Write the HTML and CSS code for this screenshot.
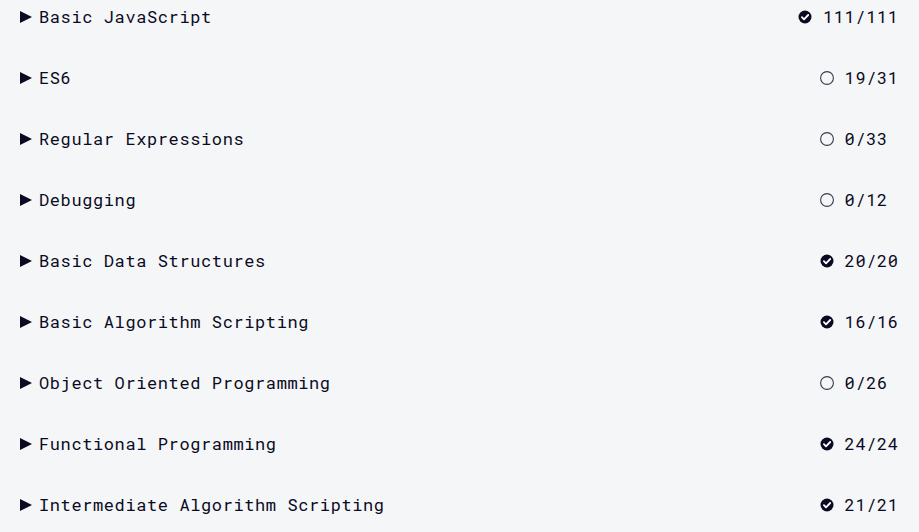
FILE: index.html
```html
<!DOCTYPE html>
<html lang="en">
<head>
<meta charset="utf-8">
<title>Curriculum</title>
<link rel="stylesheet" href="styles.css">
</head>
<body>
<ul class="blocks">
  <li class="block"><span class="title"><svg class="caret" viewBox="0 0 12 12"><polygon points="0,0 12,6 0,12"/></svg>Basic JavaScript</span><span class="progress"><svg class="icon" viewBox="0 0 14 14"><circle cx="7" cy="7" r="6.5" fill="#0a0a23"/><path d="M3.9 7.2l2.1 2.1 4.2-4.3" fill="none" stroke="#fff" stroke-width="1.8" stroke-linecap="round" stroke-linejoin="round"/></svg><span class="count">111/111</span></span></li>
  <li class="block"><span class="title"><svg class="caret" viewBox="0 0 12 12"><polygon points="0,0 12,6 0,12"/></svg>ES6</span><span class="progress"><svg class="icon" viewBox="0 0 14 14"><circle cx="7" cy="7" r="6.4" fill="none" stroke="#3b3b4f" stroke-width="1.1"/></svg><span class="count">19/31</span></span></li>
  <li class="block"><span class="title"><svg class="caret" viewBox="0 0 12 12"><polygon points="0,0 12,6 0,12"/></svg>Regular Expressions</span><span class="progress"><svg class="icon" viewBox="0 0 14 14"><circle cx="7" cy="7" r="6.4" fill="none" stroke="#3b3b4f" stroke-width="1.1"/></svg><span class="count">0/33</span></span></li>
  <li class="block"><span class="title"><svg class="caret" viewBox="0 0 12 12"><polygon points="0,0 12,6 0,12"/></svg>Debugging</span><span class="progress"><svg class="icon" viewBox="0 0 14 14"><circle cx="7" cy="7" r="6.4" fill="none" stroke="#3b3b4f" stroke-width="1.1"/></svg><span class="count">0/12</span></span></li>
  <li class="block"><span class="title"><svg class="caret" viewBox="0 0 12 12"><polygon points="0,0 12,6 0,12"/></svg>Basic Data Structures</span><span class="progress"><svg class="icon" viewBox="0 0 14 14"><circle cx="7" cy="7" r="6.5" fill="#0a0a23"/><path d="M3.9 7.2l2.1 2.1 4.2-4.3" fill="none" stroke="#fff" stroke-width="1.8" stroke-linecap="round" stroke-linejoin="round"/></svg><span class="count">20/20</span></span></li>
  <li class="block"><span class="title"><svg class="caret" viewBox="0 0 12 12"><polygon points="0,0 12,6 0,12"/></svg>Basic Algorithm Scripting</span><span class="progress"><svg class="icon" viewBox="0 0 14 14"><circle cx="7" cy="7" r="6.5" fill="#0a0a23"/><path d="M3.9 7.2l2.1 2.1 4.2-4.3" fill="none" stroke="#fff" stroke-width="1.8" stroke-linecap="round" stroke-linejoin="round"/></svg><span class="count">16/16</span></span></li>
  <li class="block"><span class="title"><svg class="caret" viewBox="0 0 12 12"><polygon points="0,0 12,6 0,12"/></svg>Object Oriented Programming</span><span class="progress"><svg class="icon" viewBox="0 0 14 14"><circle cx="7" cy="7" r="6.4" fill="none" stroke="#3b3b4f" stroke-width="1.1"/></svg><span class="count">0/26</span></span></li>
  <li class="block"><span class="title"><svg class="caret" viewBox="0 0 12 12"><polygon points="0,0 12,6 0,12"/></svg>Functional Programming</span><span class="progress"><svg class="icon" viewBox="0 0 14 14"><circle cx="7" cy="7" r="6.5" fill="#0a0a23"/><path d="M3.9 7.2l2.1 2.1 4.2-4.3" fill="none" stroke="#fff" stroke-width="1.8" stroke-linecap="round" stroke-linejoin="round"/></svg><span class="count">24/24</span></span></li>
  <li class="block"><span class="title"><svg class="caret" viewBox="0 0 12 12"><polygon points="0,0 12,6 0,12"/></svg>Intermediate Algorithm Scripting</span><span class="progress"><svg class="icon" viewBox="0 0 14 14"><circle cx="7" cy="7" r="6.5" fill="#0a0a23"/><path d="M3.9 7.2l2.1 2.1 4.2-4.3" fill="none" stroke="#fff" stroke-width="1.8" stroke-linecap="round" stroke-linejoin="round"/></svg><span class="count">21/21</span></span></li>
</ul>
</body>
</html>
```
FILE: styles.css
```css
html, body {
  margin: 0;
  padding: 0;
  background: #f5f6f7;
  overflow: hidden;
}
body {
  font-family: "Roboto Mono", "DejaVu Sans Mono", "Liberation Mono", monospace;
  font-size: 17px;
  color: #0a0a23;
}
.blocks {
  list-style: none;
  margin: -14px 0 0 0;
  padding: 0;
}
.block {
  display: flex;
  align-items: center;
  justify-content: space-between;
  height: 61px;
  padding: 0 21px 0 20px;
}
.title {
  display: flex;
  align-items: center;
  gap: 7px;
  letter-spacing: 0.6px;
}
.caret {
  width: 12px;
  height: 12px;
  fill: #0a0a23;
  flex: none;
}
.progress {
  display: flex;
  align-items: center;
  gap: 11px;
  letter-spacing: 0.6px;
  margin-right: -0.6px;
}
.count {
  min-width: 54px;
}
.icon {
  width: 14px;
  height: 14px;
  flex: none;
}
```
